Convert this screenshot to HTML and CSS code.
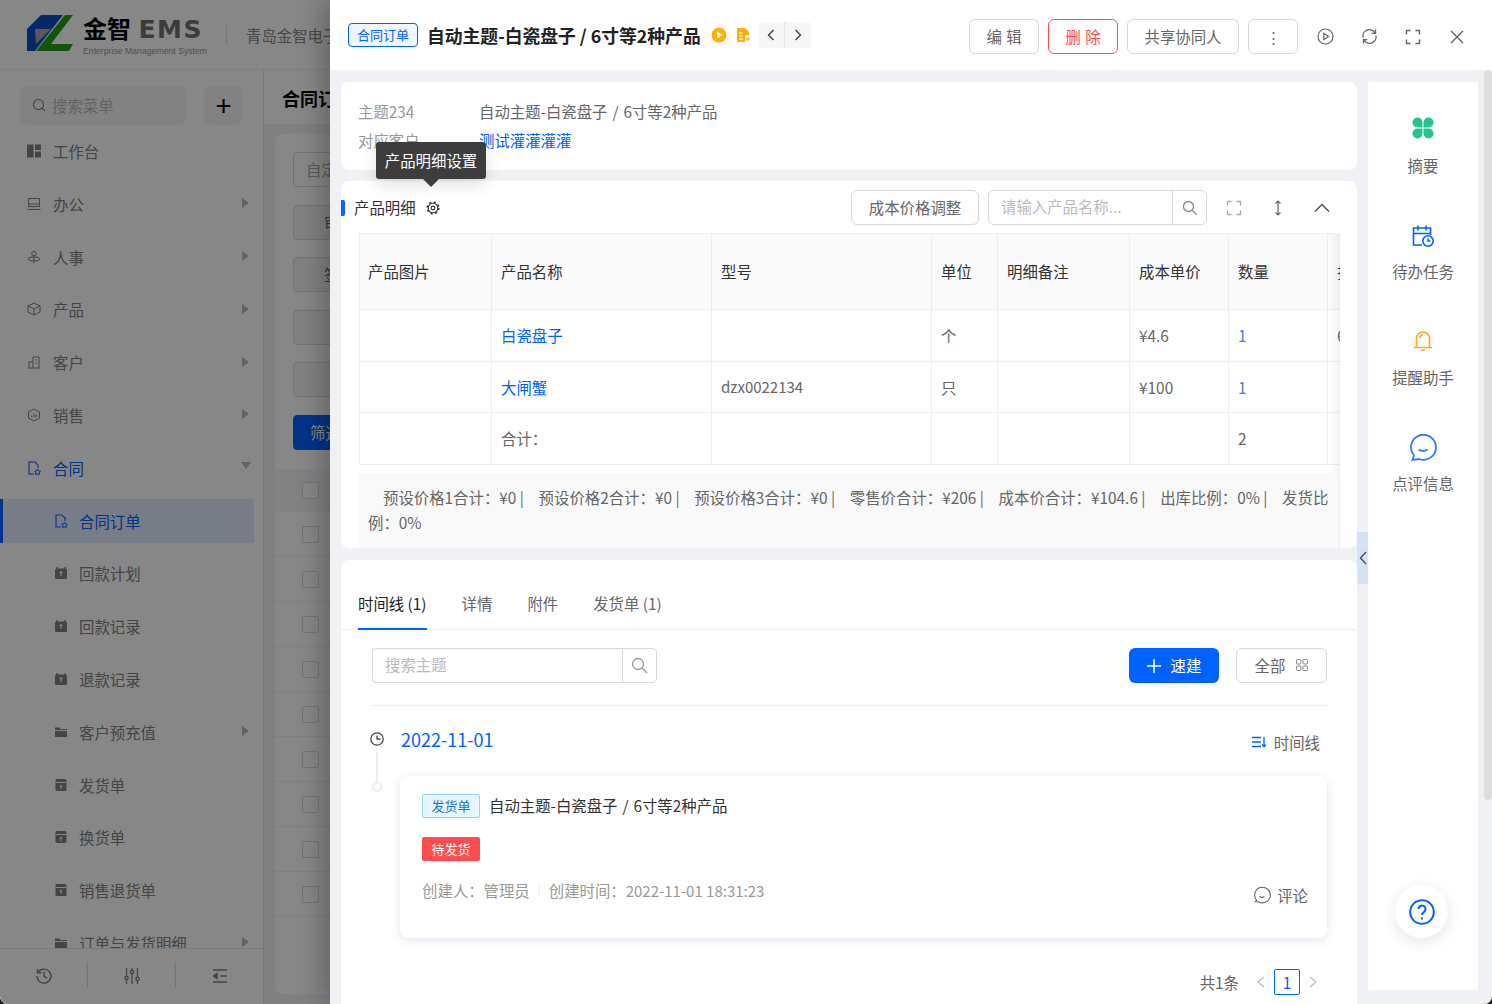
FILE: index.html
```html
<!DOCTYPE html>
<html lang="zh-CN">
<head>
    <meta charset="UTF-8">
    <meta name="viewport" content="width=device-width, initial-scale=1.0">
    <title>金智 EMS: 合同订单</title>
    <link rel="stylesheet" href="styles.css">
</head>
<body>
<div class="page">
    <svg class="sprites" width="0" height="0">
        <symbol id="i-box" viewBox="0 0 14 14"><path d="M3 1v2.500M11 1v2.500" stroke="#808080" stroke-width="1.400"/><rect x="1" y="2.500" width="12" height="10.500" rx="1.500" fill="#808080"/><path d="M7 5v5M5.500 6.500h3" stroke="#fff" stroke-width="1.200"/></symbol>
        <symbol id="i-folder" viewBox="0 0 14 14"><path d="M1 2.500h4.500l1 1.500H13v1H1zM1 6h12v6H1z" fill="#808080"/></symbol>
        <symbol id="i-doc" viewBox="0 0 14 14"><rect x="1.500" y="1" width="11" height="12" rx="1.500" fill="#808080"/><path d="M1.500 4.500h11" stroke="#fff"/><path d="M7 11V7M5.500 8.500L7 7l1.500 1.500" stroke="#fff" fill="none"/></symbol>
        <symbol id="i-contract" viewBox="0 0 14 14"><path d="M7 13H2V1h6l3 3v3" fill="none" stroke="currentColor" stroke-width="1.100"/><path d="M10.500 8l1 2 2 .3-1.500 1.400.4 2-1.900-1-1.900 1 .4-2L7.500 10.300l2-.3z" fill="none" stroke="currentColor"/></symbol>
    </svg>

    <div class="app">
        <header class="top">
            <svg class="logo-mark" width="46" height="36" viewBox="0 0 46 36">
                <path d="M0 14L14 0h22L8 36H0z" fill="#0a4fc4"/>
                <path d="M8 14h16L9 29z" fill="#a9a9a9"/>
                <path d="M46 0h-8L9 36h33l4-7H24z" fill="#20a010"/>
            </svg>
            <div class="logo-text">
                <div class="logo-name">金智 <span>EMS</span></div>
                <div class="logo-sub">Enterprise Management System</div>
            </div>
            <div class="company">青岛金智电子科技有限公司</div>
        </header>

        <aside class="side">
            <div class="side-search">
                <div class="menu-search">
                    <svg width="14" height="14" viewBox="0 0 14 14" fill="none" stroke="#808080" stroke-width="1.100"><circle cx="6.500" cy="6.500" r="5"/><path d="M10 10l3 3"/></svg>
                    搜索菜单
                </div>
                <div class="menu-add">+</div>
            </div>
            <nav class="menu">
                <div class="item"><svg width="14" height="14" viewBox="0 0 14 14" fill="#808080"><rect width="6.500" height="13" y="0.500"/><rect x="8" y="0.500" width="6" height="5.500"/><rect x="8" y="7.500" width="6" height="6"/></svg>工作台</div>
                <div class="item arrow"><svg width="14" height="14" viewBox="0 0 14 14" fill="none" stroke="#808080"><rect x="1.500" y="1.500" width="11" height="8"/><path d="M.5 12.500h13"/><path d="M1.500 7h11"/></svg>办公</div>
                <div class="item arrow"><svg width="14" height="14" viewBox="0 0 14 14" fill="none" stroke="#808080"><circle cx="7" cy="3.500" r="2.200"/><ellipse cx="7" cy="9" rx="6" ry="2"/><path d="M7 6v7"/></svg>人事</div>
                <div class="item arrow"><svg width="14" height="14" viewBox="0 0 14 14" fill="none" stroke="#808080"><path d="M7 1l6 3v6l-6 3-6-3V4zM1 4l6 3 6-3M7 7v6"/></svg>产品</div>
                <div class="item arrow"><svg width="14" height="14" viewBox="0 0 14 14" fill="none" stroke="#808080"><path d="M1 13h12M2 13V7h4M6 13V2h6v11M8.500 5h1.500M8.500 8h1.500"/></svg>客户</div>
                <div class="item arrow"><svg width="14" height="14" viewBox="0 0 14 14" fill="none" stroke="#808080"><path d="M7 1l5.500 3v6L7 13l-5.500-3V4zM4.800 9V7.500M7 9V5.500M9.200 9V6.500"/></svg>销售</div>
                <div class="item open"><svg width="14" height="14"><use href="#i-contract"/></svg>合同</div>
                <div class="item sub active"><svg width="14" height="14"><use href="#i-contract"/></svg>合同订单</div>
                <div class="item sub"><svg width="14" height="14"><use href="#i-box"/></svg>回款计划</div>
                <div class="item sub"><svg width="14" height="14"><use href="#i-box"/></svg>回款记录</div>
                <div class="item sub"><svg width="14" height="14"><use href="#i-box"/></svg>退款记录</div>
                <div class="item sub arrow"><svg width="14" height="14"><use href="#i-folder"/></svg>客户预充值</div>
                <div class="item sub"><svg width="14" height="14"><use href="#i-doc"/></svg>发货单</div>
                <div class="item sub"><svg width="14" height="14"><use href="#i-doc"/></svg>换货单</div>
                <div class="item sub"><svg width="14" height="14"><use href="#i-doc"/></svg>销售退货单</div>
                <div class="item sub arrow"><svg width="14" height="14"><use href="#i-folder"/></svg>订单与发货明细</div>
            </nav>
            <div class="side-foot">
                <div><svg width="18" height="18" viewBox="0 0 18 18" fill="none" stroke="#808080" stroke-width="1.400"><path d="M3 5.500A7 7 0 1 1 2 9M2.500 2v3.800h3.800M9 5v4.300l3 1.700"/></svg></div>
                <div><svg width="18" height="18" viewBox="0 0 18 18" fill="none" stroke="#808080" stroke-width="1.300"><path d="M3.500 1v8M3.500 12.500V17M9 1v2.500M9 7v10M14.500 1v9M14.500 13.500V17"/><circle cx="3.500" cy="10.800" r="1.700"/><circle cx="9" cy="5.200" r="1.700"/><circle cx="14.500" cy="11.800" r="1.700"/></svg></div>
                <div><svg width="18" height="18" viewBox="0 0 18 18" fill="none" stroke="#808080" stroke-width="1.400"><path d="M2 3h14M9 9h7M2 15h14"/><path d="M6 6.500L2.500 9 6 11.500z" fill="#808080"/></svg></div>
            </div>
        </aside>

        <section class="content">
            <h2 class="content-title">合同订单</h2>
            <div class="list-card">
                <div class="filter-input">自定义筛选</div>
                <div class="filter-btn">审批状态</div>
                <div class="filter-btn">签约日期</div>
                <div class="filter-btn"></div>
                <div class="filter-btn"></div>
                <div class="filter-go">筛选</div>
                <div class="list-row list-head"><i></i></div>
                <div class="list-row"><i></i></div>
                <div class="list-row"><i></i></div>
                <div class="list-row"><i></i></div>
                <div class="list-row"><i></i></div>
                <div class="list-row"><i></i></div>
                <div class="list-row"><i></i></div>
                <div class="list-row"><i></i></div>
                <div class="list-row"><i></i></div>
                <div class="list-row"><i></i></div>
            </div>
        </section>
    </div>

    <div class="mask"></div>

    <div class="drawer">
        <header class="d-head">
            <span class="type-tag">合同订单</span>
            <h1 class="d-title">自动主题-白瓷盘子 / 6寸等2种产品</h1>
            <svg class="d-play" width="16" height="16" viewBox="0 0 16 16"><circle cx="8" cy="8" r="7.500" fill="#ffb000"/><path d="M6 4.500L12 8l-6 3.500z" fill="#fff"/></svg>
            <svg class="d-file" width="13" height="14" viewBox="0 0 13 14"><path d="M0 0h8l4 4v3H8v7H0z" fill="#ffb000"/><path d="M2 5h4M2 8h4M2 11h4" stroke="#fff"/><path d="M9 11h4M11 9v4" stroke="#ffb000"/></svg>
            <div class="pager-btns">
                <span><svg width="8" height="12" viewBox="0 0 8 12" fill="none" stroke="#444" stroke-width="1.400"><path d="M6.500 1L1.500 6l5 5"/></svg></span>
                <span><svg width="8" height="12" viewBox="0 0 8 12" fill="none" stroke="#444" stroke-width="1.400"><path d="M1.500 1l5 5-5 5"/></svg></span>
            </div>
            <div class="d-actions">
                <button class="btn btn-edit">编 辑</button>
                <button class="btn btn-del">删 除</button>
                <button class="btn btn-share">共享协同人</button>
                <button class="btn btn-more">⋮</button>
                <span class="tool"><svg width="17" height="17" viewBox="0 0 17 17" fill="none" stroke="#666" stroke-width="1.200"><circle cx="8.500" cy="8.500" r="7.500"/><path d="M6.800 5.300l4.700 3.200-4.700 3.200z"/></svg></span>
                <span class="tool"><svg width="17" height="17" viewBox="0 0 17 17" fill="none" stroke="#666" stroke-width="1.300"><path d="M2 9.500A6.500 6.500 0 0 1 14 5M15 7.500A6.500 6.500 0 0 1 3 12M14.500 1.500V5.300h-3.800M2.500 15.500V11.700h3.800"/></svg></span>
                <span class="tool"><svg width="16" height="16" viewBox="0 0 16 16" fill="none" stroke="#666" stroke-width="1.400"><path d="M1.500 5.500v-4h4M10.500 1.500h4v4M14.500 10.500v4h-4M5.500 14.500h-4v-4"/></svg></span>
                <span class="tool"><svg width="16" height="16" viewBox="0 0 16 16" fill="none" stroke="#666" stroke-width="1.400"><path d="M2 2l12 12M14 2L2 14"/></svg></span>
            </div>
        </header>

        <div class="d-body">
            <div class="d-main">
                <section class="card card-info">
                    <div class="info-row"><span class="info-label">主题234</span><span class="spaced">自动主题-白瓷盘子 / 6寸等2种产品</span></div>
                    <div class="info-row"><span class="info-label">对应客户</span><a class="link">测试灌灌灌灌</a></div>
                </section>

                <section class="card card-items">
                    <div class="items-head">
                        <div class="items-title">产品明细
                            <svg width="14" height="14" viewBox="0 0 14 14" fill="none" stroke="#333"><circle cx="7" cy="7" r="4.800" stroke-width="1.100"/><circle cx="7" cy="7" r="5.900" stroke-width="1.400" stroke-dasharray="2.200 2.430"/><circle cx="7" cy="7" r="1.900" stroke-width="1.100"/></svg>
                        </div>
                        <div class="items-tools">
                            <button class="btn btn-cost">成本价格调整</button>
                            <div class="search search-items">
                                <span class="search-ph">请输入产品名称...</span>
                                <span class="search-ico"><svg width="16" height="16" viewBox="0 0 16 16" fill="none" stroke="#888" stroke-width="1.300"><circle cx="6.500" cy="6.500" r="5"/><path d="M10.200 10.200l4.500 4.500"/></svg></span>
                            </div>
                            <span class="tool-sm"><svg width="16" height="16" viewBox="0 0 16 16" fill="none" stroke="#aaa" stroke-width="1.400"><path d="M1.500 5.500v-4h4M10.500 1.500h4v4M14.500 10.500v4h-4M5.500 14.500h-4v-4"/></svg></span>
                            <span class="tool-sm"><svg width="10" height="16" viewBox="0 0 10 16" fill="none" stroke="#666" stroke-width="1.200"><path d="M5 1v14M2.500 3.500L5 1l2.500 2.500M2.500 12.500L5 15l2.500-2.500"/></svg></span>
                            <span class="tool-sm"><svg width="18" height="10" viewBox="0 0 18 10" fill="none" stroke="#555" stroke-width="1.500"><path d="M2 8.500l7-7 7 7"/></svg></span>
                        </div>
                    </div>

                    <div class="table-wrap">
                        <table class="items-table">
                            <colgroup>
                                <col class="col-m"><col class="col-l"><col class="col-l"><col class="col-s"><col class="col-m"><col class="col-n"><col class="col-n"><col class="col-m">
                            </colgroup>
                            <thead>
                                <tr><th>产品图片</th><th>产品名称</th><th>型号</th><th>单位</th><th>明细备注</th><th>成本单价</th><th>数量</th><th>折扣</th></tr>
                            </thead>
                            <tbody>
                                <tr class="r1"><td></td><td><a class="link">白瓷盘子</a></td><td></td><td>个</td><td></td><td>¥4.6</td><td class="num">1</td><td>6</td></tr>
                                <tr class="r2"><td></td><td><a class="link">大闸蟹</a></td><td class="latin">dzx0022134</td><td>只</td><td></td><td>¥100</td><td class="num">1</td><td></td></tr>
                                <tr class="r1"><td></td><td>合计：</td><td></td><td></td><td></td><td></td><td>2</td><td></td></tr>
                            </tbody>
                        </table>
                    </div>
                    <div class="totals"><span>预设价格1合计：¥0 |</span> <span>预设价格2合计：¥0 |</span> <span>预设价格3合计：¥0 |</span> <span>零售价合计：¥206 |</span> <span>成本价合计：¥104.6 |</span> <span>出库比例：0% |</span> <span>发货比例：0%</span></div>
                </section>

                <section class="card card-feed">
                    <div class="tabs">
                        <span class="tab tab-on">时间线 (1)</span>
                        <span class="tab">详情</span>
                        <span class="tab">附件</span>
                        <span class="tab">发货单 (1)</span>
                    </div>
                    <div class="feed">
                        <div class="feed-bar">
                            <div class="search search-feed">
                                <span class="search-ph">搜索主题</span>
                                <span class="search-ico"><svg width="17" height="17" viewBox="0 0 17 17" fill="none" stroke="#999" stroke-width="1.300"><circle cx="7" cy="7" r="5.500"/><path d="M11 11l5 5"/></svg></span>
                            </div>
                            <div class="feed-btns">
                                <button class="btn-primary"><svg width="14" height="14" viewBox="0 0 14 14" stroke="#fff" stroke-width="1.500"><path d="M7 0v14M0 7h14"/></svg>速建</button>
                                <button class="btn btn-all">全部<svg width="12" height="12" viewBox="0 0 12 12" fill="none" stroke="#888"><rect x=".5" y=".5" width="4.500" height="4.500" rx="1"/><rect x="7" y=".5" width="4.500" height="4.500" rx="1"/><rect x=".5" y="7" width="4.500" height="4.500" rx="1"/><rect x="7" y="7" width="4.500" height="4.500" rx="1"/></svg></button>
                            </div>
                        </div>
                        <div class="date-row">
                            <svg width="14" height="14" viewBox="0 0 14 14" fill="none" stroke="#444" stroke-width="1.300"><circle cx="7" cy="7" r="6.200"/><path d="M7 3.500V7h3.500"/></svg>
                            <span class="date">2022-11-01</span>
                            <span class="view-switch"><svg width="14" height="12" viewBox="0 0 14 12" fill="none" stroke="#0062ff" stroke-width="1.300"><path d="M0 1.500h9M0 6h9M0 10.500h9M12 1v9.500"/><path d="M10 8.500l2 2.200 2-2.200"/></svg>时间线</span>
                        </div>
                        <div class="tl-row">
                            <div class="tl-axis"><i class="tl-line"></i><i class="tl-dot"></i></div>
                            <article class="tl-card">
                                <div class="tl-title spaced"><span class="tag-doc">发货单</span>自动主题-白瓷盘子 / 6寸等2种产品</div>
                                <span class="tag-status">待发货</span>
                                <div class="tl-foot">
                                    <div class="tl-meta"><span>创建人：管理员</span><i></i><span>创建时间：<span class="latin">2022-11-01 18:31:23</span></span></div>
                                    <div class="tl-comment"><svg width="18" height="18" viewBox="0 0 18 18" fill="none" stroke="#666" stroke-width="1.100"><path d="M2.500 15.500l1-1.500a7.800 7.800 0 1 1 2.500 2z"/><path d="M6.500 10.500c1.500 1 3.500 1 5 0"/></svg>评论</div>
                                </div>
                            </article>
                        </div>
                        <div class="paging">
                            <span class="paging-total">共1条</span>
                            <svg width="9" height="12" viewBox="0 0 9 12" fill="none" stroke="#bbb" stroke-width="1.200"><path d="M8 1L2 6l6 5"/></svg>
                            <span class="paging-cur">1</span>
                            <svg width="9" height="12" viewBox="0 0 9 12" fill="none" stroke="#bbb" stroke-width="1.200"><path d="M1 1l6 5-6 5"/></svg>
                        </div>
                    </div>
                </section>
            </div>

            <aside class="rail">
                <div class="rail-item">
                    <svg width="24" height="24" viewBox="0 0 24 24" fill="#26c48a"><path d="M11.500 11.500H6.500a5 5 0 1 1 5-5zM12.500 11.500V6.500a5 5 0 1 1 5 5zM11.500 12.500v5a5 5 0 1 1-5-5zM12.500 12.500h5a5 5 0 1 1-5 5z"/></svg>
                    摘要
                </div>
                <div class="rail-item">
                    <svg width="24" height="24" viewBox="0 0 24 24" fill="none" stroke="#0062ff" stroke-width="1.600"><path d="M11 21H2.500V4h17v7M2.500 9.500h17M7 1.500v5M15 1.500v5"/><circle cx="17" cy="17" r="5.200" fill="#fff"/><path d="M17 14.500V17h2.500"/></svg>
                    待办任务
                </div>
                <div class="rail-item">
                    <svg width="24" height="24" viewBox="0 0 24 24" fill="none" stroke="#ffa51f" stroke-width="1.600"><path d="M5.500 18.500V9.500a6.500 6.500 0 0 1 13 0v9M3 18.500h18M10 21h4"/><path d="M9 9c0-1.500 1-3 2.500-3.500"/></svg>
                    提醒助手
                </div>
                <div class="rail-item">
                    <svg class="rail-chat" width="28" height="28" viewBox="0 0 28 28" fill="none" stroke="#2f7bff" stroke-width="1.800"><path d="M3.500 26l1.500-4.500A12.500 12.500 0 1 1 10 25z"/><path d="M9.500 15.500c3 2 6 2 9 0"/></svg>
                    点评信息
                </div>
            </aside>
        </div>

        <div class="fold"><svg width="8" height="14" viewBox="0 0 8 14" fill="none" stroke="#555" stroke-width="1.500"><path d="M7 1L1.500 7 7 13"/></svg></div>
        <div class="tip">产品明细设置</div>
        <div class="scroll-thumb"></div>
        <div class="help"><svg width="26" height="26" viewBox="0 0 26 26" fill="none" stroke="#0062ff" stroke-width="2"><circle cx="13" cy="13" r="11.800"/><path d="M9.500 10a3.500 3.500 0 1 1 5.500 2.900c-1.300.9-2 1.500-2 3"/><path d="M13 18.500v2"/></svg></div>
    </div>
</div>
</body>
</html>
```

FILE: styles.css
```css
* {
    margin: 0;
    padding: 0;
    box-sizing: border-box;
}
html {
    background: #222;
}
body {
    font-family: "Noto Sans CJK SC", "Noto Sans", sans-serif;
    font-size: 15.4px;
    color: #666;
    width: 1492px;
    height: 1004px;
    overflow: hidden;
}
button {
    font: inherit;
    cursor: pointer;
}
.latin {
    font-size: 15px;
}
.spaced {
    word-spacing: 1.500px;
}
.page {
    position: relative;
    width: 100%;
    height: 100%;
    overflow: hidden;
    border-radius: 0 0 8px 8px;
}
.sprites {
    position: absolute;
}

/* page behind the drawer */
.app {
    display: grid;
    grid-template-columns: 264px 1fr;
    grid-template-rows: 70px 1fr;
    height: 100%;
    background: #f0f1f5;
}
.top {
    grid-column: 1 / 3;
    display: flex;
    align-items: center;
    padding-left: 27px;
    background: #fff;
    border-bottom: 1px solid #f0f0f0;
}
.logo-mark {
    margin-top: -3px;
}
.logo-text {
    margin-left: 10px;
    color: #555;
    width: 125px;
}
.logo-name {
    font-size: 24px;
    font-weight: 700;
    line-height: 28px;
    margin-top: 2px;
    color: #000;
    white-space: nowrap;
}
.logo-name span {
    font-family: "DejaVu Sans", sans-serif;
    font-size: 25px;
    margin-left: 2px;
    color: #707070;
    letter-spacing: 1.500px;
}
.logo-sub {
    font-family: "Liberation Sans", sans-serif;
    font-size: 8.700px;
    line-height: 12px;
    margin-top: 1px;
    color: #999;
    white-space: nowrap;
}
.company {
    margin-left: 18px;
    padding-left: 19px;
    border-left: 1px solid #ddd;
    line-height: 20px;
    color: #888;
    white-space: nowrap;
}
.side {
    display: flex;
    flex-direction: column;
    height: 934px;
    background: #fff;
    border-right: 1px solid #e4e4e4;
}
.side-search {
    display: flex;
    gap: 17px;
    padding: 16px 0 4.500px 20px;
}
.menu-search {
    display: flex;
    align-items: center;
    gap: 6px;
    width: 167px;
    height: 39px;
    padding-left: 12px;
    padding-bottom: 1px;
    background: #f5f5f5;
    border-radius: 8px;
    color: #bbb;
}
.menu-add {
    width: 39px;
    height: 39px;
    background: #f5f5f5;
    border-radius: 8px;
    color: #000;
    font-size: 28px;
    line-height: 36px;
    text-align: center;
}
.menu {
    flex: 1;
    display: flex;
    flex-direction: column;
    gap: 8.8px;
    overflow: hidden;
}
.item {
    position: relative;
    flex: none;
    display: flex;
    align-items: center;
    gap: 12px;
    width: 254px;
    height: 44px;
    padding-left: 27px;
    padding-bottom: 1px;
    color: #808080;
    white-space: nowrap;
}
.item.sub {
    gap: 11px;
    padding-left: 54px;
}
.item.arrow::after {
    content: "";
    position: absolute;
    right: 5px;
    top: 16px;
    border-left: 7px solid #bbb;
    border-top: 5px solid transparent;
    border-bottom: 5px solid transparent;
}
.item.open {
    color: #0062ff;
}
.item.open::after {
    content: "";
    position: absolute;
    right: 3px;
    top: 16px;
    border-top: 7px solid #bbb;
    border-left: 5px solid transparent;
    border-right: 5px solid transparent;
}
.item.active {
    color: #0062ff;
    background: #e3edff;
    border-left: 3px solid #0062ff;
    padding-left: 51px;
}
.side-foot {
    flex: none;
    display: flex;
    align-items: center;
    height: 56px;
    padding-bottom: 2px;
    background: #fff;
    border-top: 1px solid #e8e8e8;
}
.side-foot div {
    flex: 1;
    display: flex;
    justify-content: center;
    align-items: center;
    height: 25px;
    border-right: 1px solid #ddd;
}
.side-foot div:last-child {
    border-right: none;
}
.content {
    height: 934px;
    overflow: hidden;
}
.content-title {
    height: 54px;
    padding-left: 18px;
    background: #fff;
    font-size: 18px;
    line-height: 56px;
    color: #000;
    white-space: nowrap;
}
.list-card {
    margin: 10px 0 0 11px;
    padding: 18px 0 0 18px;
    height: 860px;
    background: #fff;
    border-radius: 8px;
}
.filter-input,
.filter-btn,
.filter-go {
    width: 120px;
    height: 35px;
    border: 1px solid #d9d9d9;
    border-radius: 4px;
    line-height: 33px;
    padding-left: 12px;
    color: #aaa;
    white-space: nowrap;
}
.filter-btn {
    margin-top: 17.500px;
    background: #f5f5f5;
    color: #666;
    padding-left: 30px;
}
.filter-go {
    margin-top: 18px;
    background: #0062ff;
    border-color: #0062ff;
    color: #fff;
    padding-left: 16px;
}
.list-row {
    display: flex;
    align-items: center;
    height: 45px;
    margin-left: -18px;
    padding-left: 27px;
    border-bottom: 1px solid #f0f0f0;
}
.list-head {
    margin-top: 19px;
    height: 43px;
    background: #f5f5f5;
}
.list-row i {
    width: 17px;
    height: 17px;
    border: 1px solid #d9d9d9;
    border-radius: 2px;
    background: #fff;
}
.mask {
    position: absolute;
    inset: 0;
    background: rgba(0, 0, 0, 0.47);
}

/* drawer */
.drawer {
    position: absolute;
    top: 0;
    right: 0;
    bottom: 0;
    width: 1162px;
    display: flex;
    flex-direction: column;
    background: #f0f1f5;
    box-shadow: -8px 0 24px rgba(0, 0, 0, 0.25);
}
.d-head {
    flex: none;
    display: flex;
    align-items: center;
    height: 70px;
    padding-left: 18px;
    background: #fff;
}
.type-tag {
    width: 70px;
    height: 24px;
    background: #f0f6ff;
    border: 1px solid #0062ff;
    border-radius: 4px;
    color: #0062ff;
    font-size: 13px;
    line-height: 22px;
    text-align: center;
}
.d-title {
    margin-left: 9px;
    margin-bottom: 1px;
    font-size: 17.800px;
    font-weight: 700;
    color: #222;
    white-space: nowrap;
}
.d-play {
    margin-left: 10px;
}
.d-file {
    margin-left: 10px;
}
.pager-btns {
    display: flex;
    margin-left: 9px;
    margin-top: -1px;
    height: 26px;
    background: #f5f6f8;
    border-radius: 4px;
}
.pager-btns span {
    display: flex;
    align-items: center;
    justify-content: center;
    width: 26px;
}
.pager-btns span:first-child {
    border-right: 1px solid #e6e6e6;
}
.d-actions {
    display: flex;
    align-items: center;
    margin-left: auto;
    padding-top: 3px;
    padding-right: 13px;
}
.btn {
    height: 35px;
    padding-bottom: 2px;
    background: #fff;
    border: 1px solid #d9d9d9;
    border-radius: 6px;
    color: #666;
    white-space: nowrap;
}
.btn-edit,
.btn-del {
    width: 70px;
    margin-right: 9px;
    word-spacing: 1px;
}
.btn-del {
    border-color: #ff4d4f;
    color: #ff4d4f;
}
.btn-share {
    width: 112px;
    margin-right: 9px;
}
.btn-more {
    width: 50px;
    margin-right: 5px;
}
.tool {
    display: flex;
    align-items: center;
    justify-content: center;
    width: 44px;
}
.d-body {
    flex: 1;
    display: flex;
    padding: 12px 0 0 11px;
    min-height: 0;
    overflow: hidden;
}
.d-main {
    flex: none;
    display: flex;
    flex-direction: column;
    gap: 11px;
    width: 1016px;
}
.card {
    flex: none;
    background: #fff;
    border-radius: 8px;
}
.card-info {
    height: 88px;
    padding: 15px 17px 0;
}
.info-row {
    display: flex;
    height: 29px;
    line-height: 29px;
}
.info-label {
    width: 121px;
    color: #999;
}
.link {
    color: #0062ff;
}
.card-items {
    height: 367px;
    padding-top: 9px;
    overflow: hidden;
}
.items-head {
    display: flex;
    justify-content: space-between;
    align-items: center;
    height: 35px;
    padding-right: 14px;
}
.items-title {
    display: flex;
    align-items: center;
    padding-bottom: 2px;
    color: #333;
    line-height: 16px;
}
.items-title::before {
    content: "";
    width: 4px;
    height: 16px;
    margin: 2px 9px 0 0;
    background: #0062ff;
    border-radius: 0 2px 2px 0;
}
.items-title svg {
    margin: 2px 0 0 10px;
}
.items-tools {
    display: flex;
    align-items: center;
}
.btn-cost {
    width: 128px;
    margin-right: 9px;
}
.search {
    display: flex;
    height: 35px;
    background: #fff;
    border: 1px solid #d9d9d9;
    border-radius: 4px;
    line-height: 31px;
}
.search-ph {
    flex: 1;
    padding-left: 12px;
    color: #bbb;
    white-space: nowrap;
}
.search-ico {
    display: flex;
    align-items: center;
    justify-content: center;
    width: 34px;
    border-left: 1px solid #d9d9d9;
}
.search-items {
    width: 219px;
    border-radius: 6px;
}
.tool-sm {
    display: flex;
    align-items: center;
    justify-content: center;
    width: 43px;
    margin-left: 1px;
}
.search + .tool-sm {
    margin-left: 5px;
}
.table-wrap {
    position: relative;
    width: 981px;
    height: 240px;
    margin: 8px 0 0 18px;
    overflow: hidden;
    border-top: 1px solid #eee;
}
.table-wrap::after {
    content: "";
    position: absolute;
    top: 0;
    right: 0;
    bottom: 0;
    width: 10px;
    background: linear-gradient(to right, rgba(0, 0, 0, 0), rgba(0, 0, 0, 0.05));
}
.items-table {
    width: 1100px;
    table-layout: fixed;
    border-collapse: collapse;
}
.col-s {
    width: 66px;
}
.col-n {
    width: 99px;
}
.col-m {
    width: 132px;
}
.col-l {
    width: 220px;
}
.items-table th,
.items-table td {
    padding-left: 9px;
    border: 1px solid #eee;
    border-top: none;
    font-weight: 400;
    text-align: left;
    white-space: nowrap;
    overflow: hidden;
}
.items-table th:first-child {
    padding-left: 8px;
}
.items-table th {
    height: 75px;
    background: #fafafa;
    color: #333;
}
.items-table tr.r1 td {
    height: 52px;
}
.items-table tr.r2 td {
    height: 51px;
}
.items-table .num {
    color: #4a7fd4;
}
.totals {
    width: 981px;
    height: 75px;
    margin-left: 18px;
    padding: 12px 9px 0;
    background: #f9f9f9;
    border-right: 1px solid #eee;
    line-height: 25px;
}
.totals span {
    margin-left: 11.200px;
}
.totals span:first-child {
    margin-left: 15px;
}
.card-feed {
    height: 460px;
    margin-top: 1px;
}
.tabs {
    display: flex;
    gap: 35px;
    height: 70px;
    padding-left: 17px;
    border-bottom: 1px solid #eee;
}
.tab {
    height: 70px;
    padding-top: 32px;
    line-height: 22px;
    white-space: nowrap;
}
.tab-on {
    color: #222;
    border-bottom: 2px solid #0062ff;
}
.feed {
    padding: 18px 30px 0 31px;
}
.feed-bar {
    display: flex;
    justify-content: space-between;
    padding-bottom: 22px;
    border-bottom: 1px solid #eee;
}
.search-feed {
    width: 285px;
}
.feed-btns {
    display: flex;
    gap: 17px;
}
.btn-primary {
    display: flex;
    align-items: center;
    justify-content: center;
    gap: 10px;
    width: 90px;
    height: 35px;
    padding-bottom: 2px;
    background: #0062ff;
    border: none;
    border-radius: 6px;
    color: #fff;
}
.btn-primary svg {
    margin-top: 2px;
}
.btn-all {
    display: flex;
    align-items: center;
    justify-content: center;
    gap: 11px;
    width: 91px;
}
.date-row {
    display: flex;
    align-items: center;
    height: 24px;
    margin-top: 21px;
}
.date-row > svg {
    margin-left: -2px;
    margin-right: 17px;
}
.date {
    font-size: 18px;
    line-height: 24px;
    color: #0062ff;
}
.view-switch {
    display: flex;
    align-items: center;
    gap: 8px;
    margin-left: auto;
    margin-right: 7px;
    margin-top: 5px;
}
.tl-row {
    display: flex;
    margin-top: 25px;
}
.tl-axis {
    flex: none;
    display: flex;
    flex-direction: column;
    align-items: center;
    width: 10px;
    height: 40px;
    margin: -24px 18px 0 0;
}
.tl-line {
    width: 2px;
    height: 30px;
    background: #eee;
}
.tl-dot {
    width: 10px;
    height: 10px;
    border: 2px solid #eee;
    border-radius: 50%;
}
.tl-card {
    flex: 1;
    height: 162px;
    padding: 18px 19px 0 22px;
    background: #fff;
    border-radius: 8px;
    box-shadow: 0 2px 10px rgba(40, 70, 140, 0.14);
}
.tl-title {
    display: flex;
    align-items: center;
    gap: 9px;
    height: 24px;
    padding-bottom: 2px;
    color: #333;
    white-space: nowrap;
}
.tag-doc,
.tag-status {
    display: block;
    flex: none;
    width: 58px;
    height: 24px;
    border-radius: 2px;
    font-size: 13px;
    line-height: 22px;
    text-align: center;
}
.tag-doc {
    align-self: flex-start;
    background: #e6f7ff;
    border: 1px solid #91d5ff;
    color: #1f70d8;
}
.tag-status {
    margin-top: 19px;
    background: #ff4d4f;
    border: 1px solid #ff4d4f;
    color: #fff;
}
.tl-foot {
    display: flex;
    justify-content: space-between;
    margin-top: 19px;
}
.tl-meta {
    display: flex;
    align-items: center;
    height: 20px;
    color: #999;
    white-space: nowrap;
}
.tl-meta i {
    width: 1px;
    height: 14px;
    margin: 0 9px;
    background: #eee;
}
.tl-comment {
    display: flex;
    align-items: center;
    gap: 6px;
    margin-top: 5px;
    height: 20px;
    white-space: nowrap;
}
.paging {
    display: flex;
    align-items: center;
    justify-content: flex-end;
    gap: 9px;
    margin-top: 31px;
    padding-right: 9px;
}
.paging-total {
    margin-right: 8px;
}
.paging-cur {
    width: 26px;
    height: 26px;
    border: 1px solid #0062ff;
    border-radius: 2px;
    color: #0062ff;
    line-height: 24px;
    text-align: center;
}
.rail {
    flex: none;
    display: flex;
    flex-direction: column;
    gap: 47px;
    width: 110px;
    height: 908px;
    margin-left: 11px;
    padding-top: 34px;
    background: #fff;
}
.rail-item {
    display: flex;
    flex-direction: column;
    align-items: center;
    height: 59px;
    line-height: 20px;
    white-space: nowrap;
}
.rail-item svg {
    flex: none;
    margin-bottom: 15px;
}
.rail-item:nth-child(2) svg {
    margin-top: 2px;
    margin-bottom: 13px;
}
.rail-item:nth-child(3) svg {
    margin-top: 1px;
    margin-bottom: 14px;
}
.rail-item .rail-chat {
    margin-top: 0;
    margin-bottom: 11px;
}

/* things floating over the drawer */
.fold {
    position: absolute;
    left: 1027px;
    top: 532px;
    display: flex;
    align-items: center;
    justify-content: center;
    width: 11px;
    height: 52px;
    background: #d5e1f5;
}
.tip {
    position: absolute;
    left: 46px;
    top: 142px;
    width: 110px;
    height: 37px;
    background: #3d3d3d;
    border-radius: 3px;
    color: #fff;
    line-height: 36px;
    text-align: center;
    box-shadow: 0 6px 16px rgba(0, 0, 0, 0.12);
}
.tip::after {
    content: "";
    position: absolute;
    left: 47px;
    bottom: -8px;
    border-top: 8px solid #3d3d3d;
    border-left: 8px solid transparent;
    border-right: 8px solid transparent;
}
.scroll-thumb {
    position: absolute;
    right: 0;
    top: 70px;
    width: 8px;
    height: 730px;
    background: #ddd;
    border-radius: 4px;
}
.help {
    position: absolute;
    left: 1065px;
    top: 885px;
    display: flex;
    align-items: center;
    justify-content: center;
    width: 53px;
    height: 53px;
    background: #fff;
    border-radius: 50%;
    box-shadow: 0 4px 16px rgba(0, 0, 0, 0.1);
}
```
